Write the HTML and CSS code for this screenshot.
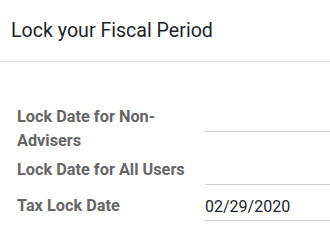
FILE: index.html
```html
<!DOCTYPE html>
<html>
<head>
<meta charset="utf-8">
<link rel="stylesheet" href="styles.css">
</head>
<body>
<div class="modal">
  <header class="modal-header">
    <h4 class="modal-title">Lock your Fiscal Period</h4>
  </header>
  <div class="modal-body">
    <div class="group">
      <div class="label">Lock Date for Non-<br>Advisers</div>
      <div class="field"><span class="input"></span></div>
      <div class="label">Lock Date for All Users</div>
      <div class="field"><span class="input"></span></div>
      <div class="label">Tax Lock Date</div>
      <div class="field"><span class="input">02/29/2020</span></div>
    </div>
  </div>
</div>
</body>
</html>
```

FILE: styles.css
```css
html, body {
  margin: 0;
  padding: 0;
  background: #ffffff;
}
body {
  font-family: Roboto, "Noto Sans", sans-serif;
  color: #212529;
  width: 330px;
  overflow: hidden;
}
.modal-header {
  height: 61px;
  border-bottom: 1px solid #dee2e6;
  padding: 0 11px;
  display: flex;
  align-items: center;
}
.modal-title {
  margin: 0;
  font-size: 19.6px;
  font-weight: 400;
  color: #212529;
  line-height: 1.2;
}
.modal-body {
  padding: 43px 0 0 17px;
}
.group {
  display: grid;
  grid-template-columns: 188px 1fr;
  grid-template-rows: 53px 36px auto;
  align-items: start;
}
.label {
  font-size: 16.3px;
  font-weight: 700;
  color: #666666;
  line-height: 24px;
}
.field {
  margin-right: -10px;
}
.input {
  display: block;
  height: 26px;
  line-height: 26px;
  border-bottom: 1px solid #d0d0d0;
  font-size: 16px;
  color: #212529;
}
```
